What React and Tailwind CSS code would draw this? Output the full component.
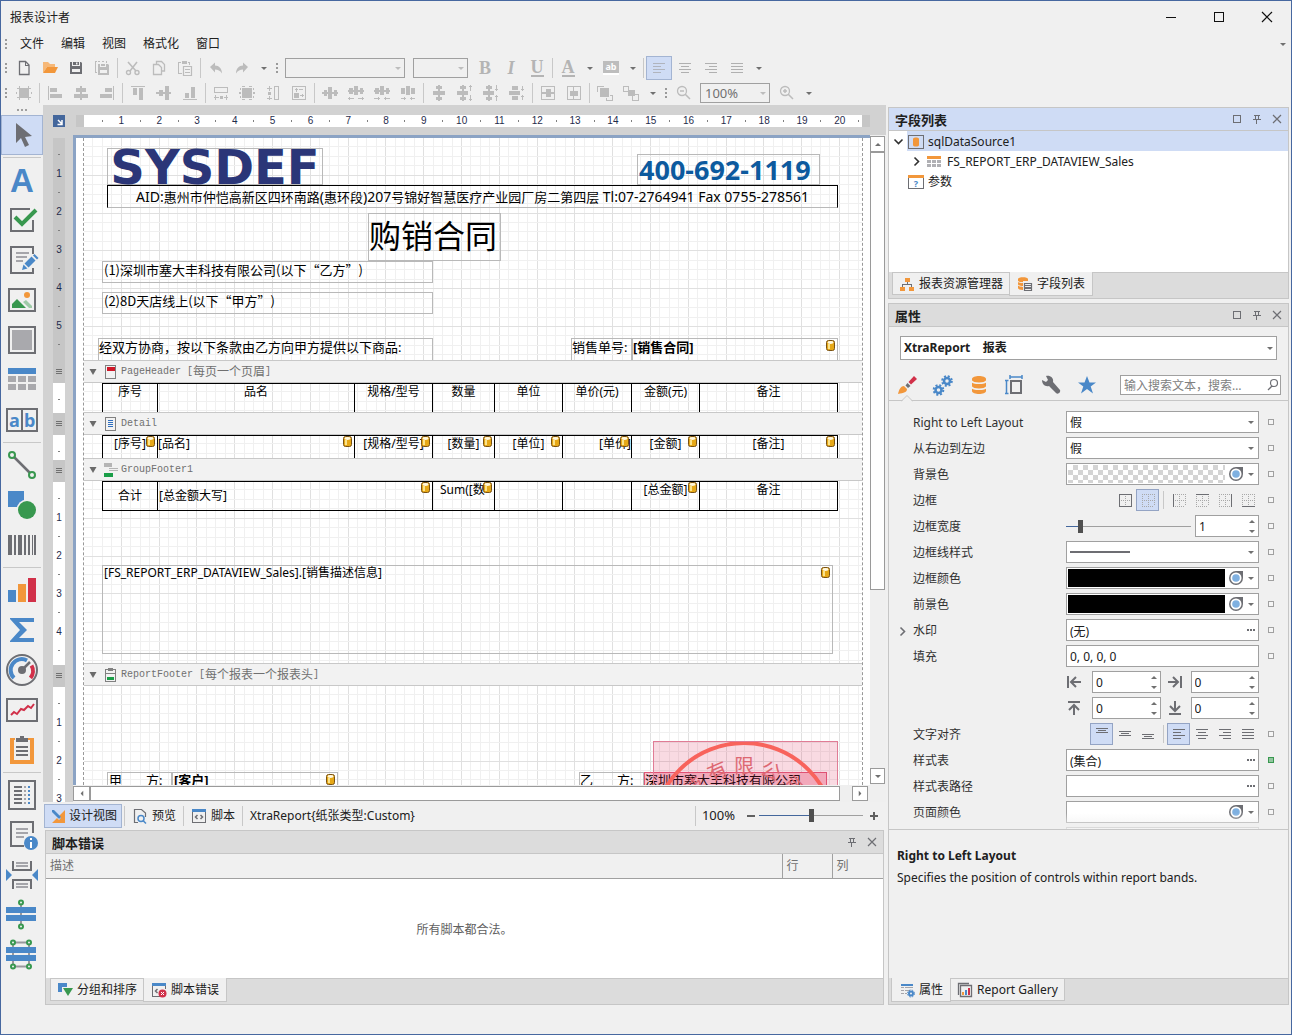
import React, { useState } from "react";
import clsx from "clsx";

const GRAY = "#6d6e73";
const OFF = "#bcbcbc";
const BLUE = "#4a88c8";
const GREEN = "#38984f";
const ORANGE = "#f2973b";
const RED = "#d13049";

const Icon = ({ s = 16, color = GRAY, children }) => (
  <svg
    width={s}
    height={s}
    viewBox={`0 0 ${s} ${s}`}
    fill="none"
    style={{ color }}
    className="shrink-0 overflow-visible"
  >
    {children}
  </svg>
);

// Filled shape snapped to the pixel grid
const Px = ({ d, c = "currentColor" }) => (
  <path d={d} fill={c} shapeRendering="crispEdges" />
);

// Outline snapped to the pixel grid
const Ln = ({ d, c = "currentColor", w = 1, dash }) => (
  <path
    d={d}
    stroke={c}
    strokeWidth={w}
    strokeDasharray={dash}
    shapeRendering="crispEdges"
  />
);

const Arrow = ({ c = "#707070", up }) => (
  <svg width="6" height="3" viewBox="0 0 6 3" className="shrink-0">
    <path d={up ? "M0 3h6L3 0z" : "M0 0h6L3 3z"} fill={c} />
  </svg>
);

const Grip = () => (
  <span className="flex h-6 w-[10px] shrink-0 items-center justify-center">
    <Icon s={10} color="#9a9a9a">
      <Px d="M4 0h2v2h-2zM4 4h2v2h-2zM4 8h2v2h-2z" />
    </Icon>
  </span>
);

const Sep = () => (
  <span className="flex h-5 w-[5px] shrink-0 justify-center">
    <span className="w-px bg-[#c8c8c8]" />
  </span>
);

const ToolButton = ({ label, active, narrow, children }) => (
  <button
    type="button"
    aria-label={label}
    className={clsx(
      "flex shrink-0 items-center justify-center",
      narrow ? "h-6 w-[17px]" : "h-6 w-[26px]",
      active && "border border-[#a3b4d2] bg-[#cfdcf5]"
    )}
  >
    {children}
  </button>
);

const ALIGN = {
  left: "M2 3h12v1h-12zM2 6h8v1h-8zM2 9h12v1h-12zM2 12h8v1h-8z",
  center: "M2 3h12v1h-12zM4 6h8v1h-8zM2 9h12v1h-12zM4 12h8v1h-8z",
  right: "M2 3h12v1h-12zM6 6h8v1h-8zM2 9h12v1h-12zM6 12h8v1h-8z",
  justify: "M2 3h12v1h-12zM2 6h12v1h-12zM2 9h12v1h-12zM2 12h12v1h-12z",
};

const AlignIcon = ({ kind, color }) => (
  <Icon color={color}>
    <Px d={ALIGN[kind]} />
  </Icon>
);

const TitleBar = () => (
  <header className="flex h-8 shrink-0 items-center justify-between pl-[9px] text-xs text-[#202020]">
    <h1 className="pt-px">报表设计者</h1>
    <div className="flex">
      <button type="button" aria-label="Minimize" className="flex h-8 w-12 items-center justify-center">
        <Icon s={12} color="#101010">
          <Px d="M1 6h10v1h-10z" />
        </Icon>
      </button>
      <button type="button" aria-label="Maximize" className="flex h-8 w-12 items-center justify-center">
        <Icon s={12} color="#101010">
          <Ln d="M1.5 1.5h9v9h-9z" />
        </Icon>
      </button>
      <button type="button" aria-label="Close" className="flex h-8 w-12 items-center justify-center">
        <Icon s={12} color="#101010">
          <path d="M1 1l10 10M11 1L1 11" stroke="currentColor" strokeWidth="1.2" />
        </Icon>
      </button>
    </div>
  </header>
);

const MenuBar = () => (
  <nav className="flex h-[22px] shrink-0 items-center gap-px text-xs text-[#202020]">
    <Grip />
    {["文件", "编辑", "视图", "格式化", "窗口"].map((m) => (
      <button key={m} type="button" className="px-2 whitespace-nowrap">
        {m}
      </button>
    ))}
    <span className="mr-[5px] ml-auto">
      <Arrow />
    </span>
  </nav>
);

const ToolbarSelect = ({ label, width, value = "" }) => (
  <span className={clsx("relative flex shrink-0", width)}>
    <select
      aria-label={label}
      defaultValue={value}
      className="h-5 w-full appearance-none border border-[#a0a0a0] bg-[#f0f0f0] px-1 text-[13px] leading-4 text-[#707070]"
    >
      <option>{value}</option>
    </select>
    <span className="pointer-events-none absolute top-[9px] right-1 flex">
      <Arrow c="#bdbdbd" />
    </span>
  </span>
);

const FormatToolbar = () => (
  <div className="flex h-[26px] shrink-0 items-center">
    <Grip />
    <ToolButton label="New">
      <Icon>
        <path d="M3.5 1.5h6l3.500 3.500v9.500h-9.500z" stroke="currentColor" strokeWidth="1.3" />
        <Px d="M9 2h1v3h3v1h-4z" />
      </Icon>
    </ToolButton>
    <ToolButton label="Open">
      <Icon>
        <path d="M1 13V2h5l2 2h5v3H5z" fill="#f6b878" />
        <path d="M1 13l4-6h11l-3 6z" fill={ORANGE} />
      </Icon>
    </ToolButton>
    <ToolButton label="Save">
      <Icon>
        <path
          fillRule="evenodd"
          d="M2 2h2v4h8V2h1l1 1v11H2zM4 9v3h8V9zM5 2h6v3H5zM8 2.500v2h1.500v-2z"
          fill="currentColor"
        />
      </Icon>
    </ToolButton>
    <ToolButton label="Save all">
      <Icon color={OFF}>
        <Px d="M1 1h2v1h-1v10h1v1h-2zM4 1h2v1h-2zM8 1h2v1h-2zM12 1h1v2h-1z" />
        <path
          fillRule="evenodd"
          d="M4 4h2v3h6V4h2l1 1v10H4zM6 10v3h7v-3zM7 4h4v2H7z"
          fill="currentColor"
        />
      </Icon>
    </ToolButton>
    <Sep />
    <ToolButton label="Cut">
      <Icon color={OFF}>
        <path d="M3 2l8 9M12 2L5 11" stroke="currentColor" strokeWidth="1.6" />
        <circle cx="3.500" cy="12.500" r="2" stroke="currentColor" strokeWidth="1.4" />
        <circle cx="12" cy="12.500" r="2" stroke="currentColor" strokeWidth="1.4" />
      </Icon>
    </ToolButton>
    <ToolButton label="Copy">
      <Icon color={OFF}>
        <path d="M5.500 4V1.500h5l3 3V11H11" stroke="currentColor" strokeWidth="1.3" />
        <path d="M2.500 4.500h5l3 3v7h-8z" stroke="currentColor" strokeWidth="1.3" />
      </Icon>
    </ToolButton>
    <ToolButton label="Paste">
      <Icon color={OFF}>
        <Px d="M1 2h3v1h-2v10h3v1h-4zM5 1h5v3h-5zM11 2h2v3h-1v-2h-1z" />
        <path d="M6.500 6.500h8v9h-8z" stroke="currentColor" strokeWidth="1.2" />
        <Px d="M8 9h5v1h-5zM8 12h5v1h-5z" />
      </Icon>
    </ToolButton>
    <Sep />
    <ToolButton label="Undo">
      <Icon color={OFF}>
        <path d="M2 7l5-4.500v3c4 0 7 3 7 8-2-3-4-4-7-4v3z" fill="currentColor" />
      </Icon>
    </ToolButton>
    <ToolButton label="Redo">
      <Icon color={OFF}>
        <path d="M14 7L9 2.500v3c-4 0-7 3-7 8 2-3 4-4 7-4v3z" fill="currentColor" />
      </Icon>
    </ToolButton>
    <ToolButton label="Toolbar options" narrow>
      <Arrow />
    </ToolButton>
    <Grip />
    <span className="ml-[3px] flex gap-2">
      <ToolbarSelect label="Font" width="w-[120px]" />
      <ToolbarSelect label="Size" width="w-[55px]" />
    </span>
    <span className="ml-1 flex items-center font-['Liberation_Serif',serif] text-lg leading-5 font-bold text-[#b4b4b4]">
      <ToolButton label="Bold">B</ToolButton>
      <ToolButton label="Italic">
        <i>I</i>
      </ToolButton>
      <ToolButton label="Underline">
        <span className="border-b-2 leading-4">U</span>
      </ToolButton>
    </span>
    <Sep />
    <span className="flex font-['Liberation_Serif',serif] text-lg font-bold text-[#b4b4b4]">
      <ToolButton label="Fore color">
        <span className="border-b-2 leading-4">A</span>
      </ToolButton>
    </span>
    <ToolButton label="Fore color list" narrow>
      <Arrow />
    </ToolButton>
    <ToolButton label="Back color">
      <span className="h-[14px] w-4 border-b-2 border-white bg-[#bdbdbd] text-[9px] leading-[11px] font-bold text-white">
        ab
      </span>
    </ToolButton>
    <ToolButton label="Back color list" narrow>
      <Arrow />
    </ToolButton>
    <Sep />
    <ToolButton label="Align left" active>
      <AlignIcon kind="left" color="#b0b4bd" />
    </ToolButton>
    <ToolButton label="Align center">
      <AlignIcon kind="center" color="#b0b0b0" />
    </ToolButton>
    <ToolButton label="Align right">
      <AlignIcon kind="right" color="#b0b0b0" />
    </ToolButton>
    <ToolButton label="Justify">
      <AlignIcon kind="justify" color="#b0b0b0" />
    </ToolButton>
    <ToolButton label="Toolbar options" narrow>
      <Arrow />
    </ToolButton>
  </div>
);

// Groups of the layout toolbar, one path per button
const layoutGroups = [
  [["Snap to grid", "M4 4h8v8h-8zM1 3h14v1h-14zM1 12h14v1h-14zM3 1h1v14h-1zM12 1h1v14h-1zM0 7h1v2h-1zM15 7h1v2h-1z"]],
  [
    ["Align lefts", "M1 1h1v14h-1zM3 3h7v4h-7zM3 9h12v4h-12z"],
    ["Align centers", "M7 1h2v14h-2zM3 3h10v4h-10zM1 9h14v4h-14z"],
    ["Align rights", "M14 1h1v14h-1zM6 3h7v4h-7zM1 9h12v4h-12z"],
  ],
  [
    ["Align tops", "M1 1h14v1h-14zM3 3h4v7h-4zM9 3h4v12h-4z"],
    ["Align middles", "M0 7h15v2h-15zM3 5h4v6h-4zM9 1h4v14h-4z"],
    ["Align bottoms", "M1 14h14v1h-14zM3 8h4v5h-4zM9 2h4v11h-4z"],
  ],
  [
    ["Same width", "M1 2h14v1h-14zM1 7h14v1h-14zM1 2h1v6h-1zM14 2h1v6h-1zM1 12h5v1h-5zM2 10h1v5h-1zM7 11h3v3h-3zM11 12h4v1h-4zM13 10h1v5h-1z"],
    ["Size to grid", "M3 3h10v10h-10zM1 3h1v2h-1zM1 11h1v2h-1zM14 3h1v2h-1zM14 11h1v2h-1zM3 1h3v1h-3zM10 1h3v1h-3zM3 14h3v1h-3zM10 14h3v1h-3zM0 7h2v2h-2zM14 7h2v2h-2z"],
    ["Same height", "M9 1h5v1h-5zM9 14h5v1h-5zM9 1h1v14h-1zM13 1h1v14h-1zM4 1h1v5h-1zM2 3h5v1h-5zM3 7h3v3h-3zM4 11h1v4h-1zM2 13h5v1h-5z"],
    ["Same size", "M1 1h14v1h-14zM1 14h14v1h-14zM1 1h1v14h-1zM14 1h1v14h-1zM3 8h5v5h-5zM5 3h1v4h-1zM4 4h3v1h-3zM9 10h4v1h-4zM11 9h1v3h-1zM8 4h4v1h-4z"],
  ],
  [
    ["Equal horizontal spacing", "M0 7h16v2h-16zM2 5h3v6h-3zM6 2h4v12h-4zM12 5h3v6h-3z"],
    ["Increase horizontal spacing", "M0 5h16v2h-16zM1 3h4v6h-4zM6 1h4v9h-4zM12 3h3v6h-3zM0 13h6v1h-6zM1 12h1v3h-1zM10 13h6v1h-6zM14 12h1v3h-1z"],
    ["Decrease horizontal spacing", "M0 5h16v2h-16zM1 3h4v6h-4zM6 1h4v9h-4zM12 3h3v6h-3zM0 13h6v1h-6zM4 12h1v3h-1zM10 13h6v1h-6zM11 12h1v3h-1z"],
    ["Remove horizontal spacing", "M1 3h4v6h-4zM6 1h4v9h-4zM11 3h4v6h-4zM1 13h5v1h-5zM4 12h1v3h-1zM10 13h5v1h-5zM11 12h1v3h-1z"],
  ],
  [
    ["Equal vertical spacing", "M7 0h2v16h-2zM5 1h6v3h-6zM2 6h12v4h-12zM5 12h6v3h-6z"],
    ["Increase vertical spacing", "M5 0h2v16h-2zM3 1h6v3h-6zM0 6h11v4h-11zM3 12h6v3h-6zM13 0h1v6h-1zM12 1h3v1h-3zM13 10h1v6h-1zM12 14h3v1h-3z"],
    ["Decrease vertical spacing", "M5 0h2v16h-2zM3 1h6v3h-6zM0 6h11v4h-11zM3 12h6v3h-6zM13 0h1v6h-1zM12 4h3v1h-3zM13 10h1v6h-1zM12 11h3v1h-3z"],
    ["Remove vertical spacing", "M3 1h6v4h-6zM0 6h11v4h-11zM3 11h6v4h-6zM13 1h1v5h-1zM12 4h3v1h-3zM13 10h1v5h-1zM12 11h3v1h-3z"],
  ],
  [
    ["Center horizontally", "M1 1h14v1h-14zM1 14h14v1h-14zM1 1h1v14h-1zM14 1h1v14h-1zM6 4h5v8h-5zM2 7h12v2h-12z"],
    ["Center vertically", "M1 1h14v1h-14zM1 14h14v1h-14zM1 1h1v14h-1zM14 1h1v14h-1zM4 6h8v5h-8zM7 2h1v12h-1z"],
  ],
  [
    ["Bring to front", "M3 3h9v9h-9zM0 1h7v1h-7zM0 1h1v6h-1zM15 10h1v6h-1zM9 15h7v1h-7zM13 10h3v1h-3zM9 13h1v3h-1z"],
    ["Send to back", "M5 5h7v6h-7zM0 1h6v1h-6zM0 6h6v1h-6zM0 1h1v6h-1zM5 1h1v6h-1zM9 9h7v1h-7zM9 15h7v1h-7zM9 9h1v7h-1zM15 9h1v7h-1z"],
  ],
];

const LayoutToolbar = () => (
  <div className="flex h-6 shrink-0 items-center">
    <Grip />
    {layoutGroups.map((group, i) => (
      <React.Fragment key={i}>
        {i > 0 && <Sep />}
        {group.map(([label, d]) => (
          <ToolButton key={label} label={label}>
            <Icon color={OFF}>
              <Px d={d} />
            </Icon>
          </ToolButton>
        ))}
      </React.Fragment>
    ))}
    <ToolButton label="Toolbar options" narrow>
      <Arrow />
    </ToolButton>
    <Grip />
    <ToolButton label="Zoom out">
      <Icon color={OFF}>
        <circle cx="6" cy="6" r="4.500" stroke="currentColor" strokeWidth="1.3" />
        <path d="M4 6h4M9 9l5 5" stroke="currentColor" strokeWidth="1.5" />
      </Icon>
    </ToolButton>
    <span className="ml-[3px] flex">
      <ToolbarSelect label="Zoom" width="w-[70px]" value="100%" />
    </span>
    <span className="ml-1 flex">
      <ToolButton label="Zoom in">
        <Icon color={OFF}>
          <circle cx="6" cy="6" r="4.500" stroke="currentColor" strokeWidth="1.3" />
          <path d="M4 6h4M6 4v4M9 9l5 5" stroke="currentColor" strokeWidth="1.5" />
        </Icon>
      </ToolButton>
      <ToolButton label="Toolbar options" narrow>
        <Arrow />
      </ToolButton>
    </span>
  </div>
);

const toolboxGroups = [
  [
    [
      "Label",
      <text x="16" y="28" textAnchor="middle" fontSize="33" fontWeight="700" fill={BLUE} fontFamily="Liberation Sans, sans-serif">
        A
      </text>,
    ],
    [
      "Check box",
      <>
        <path d="M24 5H5v22h22V16" stroke={GRAY} strokeWidth="2" />
        <path d="M9 13l7 7L30 6" stroke={GREEN} strokeWidth="4" />
      </>,
    ],
    [
      "Rich text",
      <>
        <path d="M27 10V3H5v26h22v-5" stroke={GRAY} strokeWidth="2" />
        <Px d="M10 8h13v2h-13zM10 12h11v2h-11zM10 16h7v2h-7z" c="#a5a5aa" />
        <path d="M16 26l1.500-5.500 4 4z" fill={BLUE} />
        <path d="M18.500 19.500l7-7 4 4-7 7zM27 11.500l1.500-1.500 4 4-1.500 1.500z" fill={BLUE} />
      </>,
    ],
    [
      "Picture box",
      <>
        <path d="M3 5h26v22H3z" stroke={GRAY} strokeWidth="2" />
        <path d="M6 24v-4l5-5 9 9z" fill={GREEN} />
        <path d="M17 18l3-2 6 6v2h-3z" fill="#9ecaa7" />
        <circle cx="21" cy="11" r="3" fill={ORANGE} />
      </>,
    ],
    [
      "Panel",
      <>
        <path d="M3 3h26v26H3z" stroke={GRAY} strokeWidth="2" />
        <Px d="M6 6h20v20h-20z" c="#a9a9ad" />
      </>,
    ],
    [
      "Table",
      <>
        <Px d="M2 4h28v6h-28z" c={BLUE} />
        <Px
          d="M2 12h8v6h-8zM12 12h8v6h-8zM22 12h8v6h-8zM2 20h8v6h-8zM12 20h8v6h-8zM22 20h8v6h-8z"
          c="#a9a9ad"
        />
      </>,
    ],
    [
      "Character comb",
      <>
        <path d="M1 5h30v22H1zM16 5v22" stroke={GRAY} strokeWidth="2" />
        <text x="3" y="23" fontSize="18" fontWeight="700" fill={BLUE} fontFamily="Noto Sans, sans-serif">
          a
        </text>
        <text x="18" y="23" fontSize="18" fontWeight="700" fill={BLUE} fontFamily="Noto Sans, sans-serif">
          b
        </text>
      </>,
    ],
  ],
  [
    [
      "Line",
      <>
        <path d="M8 8l16 16" stroke={GRAY} strokeWidth="2.5" />
        <circle cx="6" cy="6" r="3" stroke={GREEN} strokeWidth="2" />
        <circle cx="26" cy="26" r="3" stroke={GREEN} strokeWidth="2" />
      </>,
    ],
    [
      "Shape",
      <>
        <Px d="M2 2h16v16h-16z" c={BLUE} />
        <circle cx="21" cy="21" r="10.500" fill="#f0f0f0" />
        <circle cx="21" cy="21" r="9" fill={GREEN} />
      </>,
    ],
    [
      "Bar code",
      <Px
        d="M2 6h4v20h-4zM8 6h2v20h-2zM12 6h4v20h-4zM18 6h2v20h-2zM22 6h2v20h-2zM26 6h1v20h-1zM28 6h2v20h-2z"
        c={GRAY}
      />,
    ],
  ],
  [
    [
      "Chart",
      <>
        <Px d="M2 16h8v12h-8z" c={BLUE} />
        <Px d="M12 10h8v18h-8z" c={ORANGE} />
        <Px d="M22 4h8v24h-8z" c={RED} />
      </>,
    ],
    ["Pivot grid", <path d="M4 4h24v4H13l8 8-8 8h15v4H4v-1l10-11L4 5z" fill={BLUE} />],
    [
      "Gauge",
      <>
        <circle cx="16" cy="16" r="15" stroke={GRAY} strokeWidth="2" />
        <path d="M8 24A11 11 0 0 1 21 6.500" stroke={BLUE} strokeWidth="4" />
        <path d="M25.500 11.500A11 11 0 0 1 24.500 24" stroke={RED} strokeWidth="4" />
        <circle cx="16" cy="16" r="4" fill={GRAY} />
        <path d="M16 16l8-8" stroke={GRAY} strokeWidth="2.5" />
      </>,
    ],
    [
      "Sparkline",
      <>
        <path d="M1 5h30v22H1z" stroke={GRAY} strokeWidth="2" />
        <path d="M5 21l3-3 3 2 4-5 3 1 4-4 3 2 3-4" stroke={RED} strokeWidth="2" />
      </>,
    ],
    [
      "Sub-report",
      <>
        <Px d="M4 4h5v2h-1v20h16v-20h-2v-2h6v26h-24z" c={ORANGE} />
        <Px d="M10 4h4v-2h4v2h4v4h-12z" c={GRAY} />
        <Px d="M10 12h12v2h-12zM10 16h12v2h-12zM10 20h12v2h-12z" c={GRAY} />
      </>,
    ],
  ],
  [
    [
      "Table of contents",
      <>
        <path d="M3 2h26v28H3z" stroke={GRAY} strokeWidth="2" />
        <Px d="M8 7h8v2h-8zM8 11h8v2h-8zM8 15h8v2h-8zM8 19h8v2h-8zM8 23h8v2h-8z" c={GRAY} />
        <Px d="M18 7h2v2h-2zM18 11h2v2h-2zM18 15h2v2h-2zM18 19h2v2h-2zM18 23h2v2h-2z" c="#a5a5aa" />
        <Px d="M22 7h2v2h-2zM22 11h2v2h-2zM22 15h2v2h-2zM22 19h2v2h-2zM22 23h2v2h-2z" c={BLUE} />
      </>,
    ],
    [
      "Page info",
      <>
        <path d="M27 14V3H5v24h13" stroke={GRAY} strokeWidth="2" />
        <Px d="M10 9h12v2h-12zM10 13h12v2h-12zM10 17h8v2h-8z" c="#a5a5aa" />
        <circle cx="25" cy="24" r="7" fill={BLUE} />
        <Px d="M24 19h2v2h-2zM24 23h2v6h-2z" c="#fff" />
      </>,
    ],
    [
      "Page break",
      <>
        <path d="M7 2v9h18V2M7 30v-9h18v9" stroke={GRAY} strokeWidth="2" />
        <Px d="M10 3h12v2h-12zM10 6h12v2h-12zM10 24h12v2h-12zM10 27h12v2h-12z" c="#a5a5aa" />
        <path d="M0 10v12l6-6zM32 10v12l-6-6z" fill={BLUE} />
      </>,
    ],
    [
      "Cross-band line",
      <>
        <Px d="M14 4h2v24h-2z" c="#98989c" />
        <Px d="M0 8h30v6h-30zM0 16h30v6h-30z" c={BLUE} />
        <circle cx="15" cy="3.500" r="2" stroke={GREEN} strokeWidth="2" fill="#f0f0f0" />
        <circle cx="15" cy="27.500" r="2" stroke={GREEN} strokeWidth="2" fill="#f0f0f0" />
      </>,
    ],
    [
      "Cross-band box",
      <>
        <path d="M7 3.500h16v24H7z" stroke="#98989c" strokeWidth="2" />
        <Px d="M0 8h30v6h-30zM0 16h30v6h-30z" c={BLUE} />
        {[
          [7, 3.5],
          [23, 3.5],
          [7, 27.5],
          [23, 27.5],
        ].map(([x, y]) => (
          <circle key={`${x}-${y}`} cx={x} cy={y} r="2" stroke={GREEN} strokeWidth="2" fill="#f0f0f0" />
        ))}
      </>,
    ],
  ],
];

const Toolbox = () => (
  <aside className="flex w-[42px] shrink-0 flex-col">
    <span className="flex h-[10px] items-center justify-center gap-[2px]">
      <i className="size-[2px] bg-[#a0a0a0]" />
      <i className="size-[2px] bg-[#a0a0a0]" />
      <i className="size-[2px] bg-[#a0a0a0]" />
    </span>
    <button
      type="button"
      aria-label="Pointer"
      className="flex h-10 items-center justify-center border border-[#a3b4d2] bg-[#cfdcf5]"
    >
      <Icon s={32}>
        <path d="M10 4v20l5-5 4 9 4-2-4-8 7-1z" fill={GRAY} />
      </Icon>
    </button>
    {toolboxGroups.map((group, i) => (
      <React.Fragment key={i}>
        <hr className="mx-[2px] my-[2px] border-[#c8c8c8]" />
        {group.map(([label, art]) => (
          <button
            key={label}
            type="button"
            aria-label={label}
            className="flex h-10 items-center justify-center"
          >
            <Icon s={32}>{art}</Icon>
          </button>
        ))}
      </React.Fragment>
    ))}
  </aside>
);

const rulerText = "font-['Liberation_Sans',sans-serif] text-[10px] leading-3 text-[#1f2c4d]";

const HorizontalRuler = () => (
  <div className="flex h-[30px] shrink-0 pt-[10px] pl-[10px]">
    <button
      type="button"
      aria-label="Report menu"
      className="flex size-3 items-center justify-center bg-[#44679c]"
    >
      <Icon s={12} color="#fff">
        <path d="M5 5l4 4M9 5v4.500H4.500" stroke="currentColor" strokeWidth="1.5" />
      </Icon>
    </button>
    <span className="ml-[11px] h-3 w-2 bg-[#c6c6c6]" />
    <div className={clsx("flex h-3 flex-1 overflow-hidden bg-white pl-[9px]", rulerText)}>
      <div className="flex w-[775px] shrink-0">
        {Array.from({ length: 41 }, (_, i) => (
          <span key={i} className="flex flex-1 items-center justify-center">
            {i % 2 ? (i + 1) / 2 : <i className="h-[2px] w-px bg-[#808080]" />}
          </span>
        ))}
      </div>
    </div>
    <span className="mr-4 h-3 w-2 bg-[#c6c6c6]" />
  </div>
);

const RulerPart = ({ ticks, className }) => (
  <div className={clsx("shrink-0 overflow-hidden pt-[7px]", rulerText, className)}>
    {Array.from({ length: ticks }, (_, i) => (
      <span key={i} className="flex h-[19px] items-center justify-center">
        {i % 2 ? (i + 1) / 2 : <i className="h-px w-[2px] bg-[#808080]" />}
      </span>
    ))}
  </div>
);

const RulerHandle = () => (
  <span className="flex h-[22px] w-3 shrink-0 items-center justify-center bg-[#c6c6c6]">
    <Icon s={6} color="#707070">
      <Px d="M0 0h6v1h-6zM0 2h6v1h-6zM0 4h6v1h-6z" />
    </Icon>
  </span>
);

const VerticalRuler = () => (
  <div className="mr-2 ml-[10px] flex w-3 shrink-0 flex-col overflow-hidden pt-[3px]">
    <RulerPart ticks={11} className="h-[223px] bg-[#c6c6c6]" />
    <RulerHandle />
    <RulerPart ticks={1} className="h-[30px] bg-white" />
    <RulerHandle />
    <RulerPart ticks={1} className="h-[25px] bg-white" />
    <RulerHandle />
    <RulerPart ticks={9} className="h-[183px] bg-white" />
    <RulerHandle />
    <RulerPart ticks={6} className="flex-1 bg-white" />
  </div>
);

// Four thin lines per centimetre, the fourth one darker
const Grid = () => {
  const step = 96 / 2.54 / 4;
  const at = (i) => Math.round(i * step) - 0.5;
  const shade = (i) => (i % 4 ? "#f0f0f0" : "#e0e0e0");
  const order = (n) =>
    Array.from({ length: n }, (_, i) => i + 1).sort((a, b) => (a % 4 === 0) - (b % 4 === 0));
  return (
    <svg className="absolute inset-0 size-full" aria-hidden="true">
      {order(82).map((i) => (
        <line key={`v${i}`} x1={at(i)} x2={at(i)} y1="0" y2="100%" stroke={shade(i)} />
      ))}
      {order(24).map((i) => (
        <line key={`h${i}`} y1={at(i)} y2={at(i)} x1="0" x2="100%" stroke={shade(i)} />
      ))}
    </svg>
  );
};

const DbIcon = ({ className }) => (
  <svg width="9" height="11" viewBox="0 0 9 11" className={clsx("absolute", className)}>
    <rect x="0.5" y="0.5" width="8" height="10" rx="2" fill="#e6a817" stroke="#7a5212" />
    <path d="M2 4h2v5h-2z" fill="#fbe38a" />
    <ellipse cx="4.500" cy="2.500" rx="3" ry="1.400" fill="#fff8e0" />
  </svg>
);

const Label = ({ className, bound, children }) => (
  <div className={clsx("absolute border border-[#b9b9b9] whitespace-nowrap text-black", className)}>
    {children}
    {bound && <DbIcon className="top-[1px] right-[2px]" />}
  </div>
);

const Band = ({ className, children }) => (
  <section className={clsx("relative overflow-hidden", className)}>
    <Grid />
    {children}
  </section>
);

const BandTitle = ({ icon, name, note }) => (
  <h3 className="flex h-[23px] shrink-0 items-center border-y border-[#c8c8c8] bg-[#f2f2f2] pl-[5px] text-xs whitespace-nowrap text-[#707070]">
    <Icon s={8}>
      <path d="M0.500 1h7L4 7z" fill="#6a6a6a" />
    </Icon>
    <span className="mr-[2px] ml-[6px] flex">
      <Icon s={16}>{icon}</Icon>
    </span>
    <span className="font-['Liberation_Mono',monospace] text-[10px]">
      {name}
      {note && "\u00a0["}
    </span>
    {note}
    {note && <span className="font-['Liberation_Mono',monospace] text-[10px]">]</span>}
  </h3>
);

const Columns = () => (
  <colgroup>
    <col className="w-[55px]" />
    <col className="w-[197px]" />
    <col className="w-[78px]" />
    <col className="w-[62px]" />
    <col className="w-[68px]" />
    <col className="w-[69px]" />
    <col className="w-[68px]" />
    <col className="w-[138px]" />
  </colgroup>
);

const tableStyle =
  "relative ml-[18px] w-[735px] table-fixed border-collapse text-xs leading-4 whitespace-nowrap text-black";
const cell = "relative overflow-hidden border border-b-0 border-black p-0 font-normal";

const detailCells = [
  ["[序号]", "text-center"],
  ["[品名]", "text-left"],
  ["[规格/型号]", "text-center"],
  ["[数量]", "text-center"],
  ["[单位]", "text-center"],
  ["[单价]", "text-right"],
  ["[金额]", "text-center"],
  ["[备注]", "text-center"],
];

// Company seal: characters run along the inside of the ring
const Seal = () => (
  <svg
    width="185"
    height="186"
    viewBox="0 0 185 186"
    className="absolute top-[55px] left-[569px] border border-[#e07c95]"
  >
    <rect width="185" height="186" fill="#e03060" fillOpacity="0.18" />
    <circle cx="91" cy="93" r="92" fill="none" stroke="#f8635c" strokeWidth="4" />
    {["科", "技", "有", "限", "公", "司", "章"].map((ch, i) => (
      <text
        key={ch}
        x="91"
        y="31"
        fontSize="20"
        textAnchor="middle"
        fill="#dd6872"
        transform={`rotate(${(i - 3) * 23} 91 93)`}
      >
        {ch}
      </text>
    ))}
  </svg>
);

const Surface = () => (
  <div className="flex min-h-0 flex-1 overflow-hidden border-t-[3px] border-l-[3px] border-[#8ba3c4] bg-white pr-[7px] pl-[7px]">
    <div className="flex min-w-0 flex-1 flex-col border-x border-dashed border-[#999999]">
      <Band className="h-[222px] shrink-0">
        <Label className="top-[10px] left-[23px] flex h-[37px] w-[216px] items-center justify-center font-['DejaVu_Sans',sans-serif] text-[48px] leading-[36px] font-bold">
          <span className="text-[#2b3678]">SYSDEF</span>
        </Label>
        <Label className="top-4 left-[553px] h-[31px] w-[183px] pl-px text-[27px] leading-[30px] font-bold">
          <span className="text-[#0d5a9e]">400-692-1119</span>
        </Label>
        <Label className="top-[47px] left-[23px] h-[23px] w-[731px] border-t-black! border-r-black! border-l-black! text-center text-sm leading-[22px]">
          AID:
          <span className="text-[13px]">惠州市仲恺高新区四环南路</span>(
          <span className="text-[13px]">惠环段</span>)207
          <span className="text-[13px]">号锦好智慧医疗产业园厂房二第四层</span> Tl:07-2764941 Fax
          0755-278561
        </Label>
        <Label className="top-[75px] left-[284px] h-12 w-[133px] text-[32px] leading-[44px]">
          购销合同
        </Label>
        <Label className="top-[123px] left-[18px] h-[22px] w-[331px] pl-px font-['Noto_Sans_CJK_SC',sans-serif] text-[13px] leading-4 [text-spacing-trim:space-all]">
          (1)深圳市塞大丰科技有限公司(以下“乙方”)
        </Label>
        <Label className="top-[154px] left-[18px] h-[22px] w-[331px] pl-px font-['Noto_Sans_CJK_SC',sans-serif] text-[13px] leading-4 [text-spacing-trim:space-all]">
          (2)8D天店线上(以下“甲方”)
        </Label>
        <Label className="top-[200px] left-[14px] h-6 w-[335px] text-[13px] leading-4">
          经双方协商，按以下条款由乙方向甲方提供以下商品:
        </Label>
        <Label className="top-[200px] left-[487px] h-6 w-[61px] text-[13px] leading-4">
          销售单号:
        </Label>
        <Label className="top-[200px] left-[548px] h-6 w-[206px] text-[13px] leading-4 font-bold" bound>
          [销售合同]
        </Label>
      </Band>

      <BandTitle
        name="PageHeader"
        note="每页一个页眉"
        icon={
          <>
            <Ln d="M2.500 1.500h10v13h-10z" c="#808080" />
            <Px d="M4 3h8v4h-8z" c="#d01828" />
          </>
        }
      />
      <Band className="h-[29px] shrink-0">
        <table className={clsx(tableStyle, "h-[34px]")}>
          <Columns />
          <thead>
            <tr className="align-top">
              {["序号", "品名", "规格/型号", "数量", "单位", "单价(元)", "金额(元)", "备注"].map((h) => (
                <th key={h} className={cell}>
                  {h}
                </th>
              ))}
            </tr>
          </thead>
        </table>
      </Band>

      <BandTitle
        name="Detail"
        icon={
          <>
            <Ln d="M2.500 1.500h10v13h-10z" c="#808080" />
            <Px d="M5 4h5v1h-5zM5 6h5v1h-5zM5 8h5v1h-5zM5 10h5v1h-5z" c="#2f6fc0" />
          </>
        }
      />
      <Band className="h-[23px] shrink-0">
        <table className={clsx(tableStyle, "h-[28px]")}>
          <Columns />
          <tbody>
            <tr className="align-top">
              {detailCells.map(([text, align]) => (
                <td key={text} className={clsx(cell, align)}>
                  {text}
                  <DbIcon className="top-0 right-[2px]" />
                </td>
              ))}
            </tr>
          </tbody>
        </table>
      </Band>

      <BandTitle
        name="GroupFooter1"
        icon={
          <>
            <Px d="M1 1h8v4h-8zM6 6h9v1h-9zM6 8h9v1h-9z" c="#b5b5b5" />
            <Px d="M1 11h9v4h-9z" c="#1a9e48" />
          </>
        }
      />
      <Band className="h-[182px] shrink-0">
        <table className={clsx(tableStyle, "h-[30px] border-b border-black")}>
          <Columns />
          <tbody>
            <tr className="align-top">
              <td className={clsx(cell, "text-center align-middle")}>合计</td>
              <td colSpan={2} className={clsx(cell, "pl-px align-middle")}>
                [总金额大写]
                <DbIcon className="top-0 right-[2px]" />
              </td>
              <td className={clsx(cell, "pl-[7px]")}>
                Sum([数
                <DbIcon className="top-0 right-[2px]" />
              </td>
              <td className={cell} />
              <td className={cell} />
              <td className={clsx(cell, "text-center")}>
                [总金额]
                <DbIcon className="top-0 right-[2px]" />
              </td>
              <td className={clsx(cell, "text-center")}>备注</td>
            </tr>
          </tbody>
        </table>
        <Label className="top-[84px] left-[18px] h-[89px] w-[731px] pl-px text-xs leading-[14px]" bound>
          [FS_REPORT_ERP_DATAVIEW_Sales].[销售描述信息]
        </Label>
      </Band>

      <BandTitle
        name="ReportFooter"
        note="每个报表一个报表头"
        icon={
          <>
            <Px d="M2 2h3v1h-2v11h9v-11h-2v-1h3v13h-11zM5 1h5v3h-5zM3 6h9v1h-9z" c="#808080" />
            <Px d="M4 10h7v3h-7z" c="#1a9e48" />
          </>
        }
      />
      <Band className="min-h-0 flex-1">
        <Label className="top-[86px] left-[23px] h-6 w-[65px] pl-px text-[13px] leading-[14px]">
          甲<span className="ml-6">方:</span>
        </Label>
        <Label className="top-[86px] left-[88px] h-6 w-[166px] pl-px text-[13px] leading-[14px] font-bold" bound>
          [客户]
        </Label>
        <Label className="top-[86px] left-[495px] h-6 w-[65px] text-[13px] leading-[14px]">
          乙<span className="ml-6">方:</span>
        </Label>
        <Label className="top-[86px] left-[560px] h-6 w-[183px] border-[#e05878]! bg-[#f7c3cf] text-[13px] leading-[14px]">
          深圳市塞大丰科技有限公司
        </Label>
        <Seal />
      </Band>
    </div>
  </div>
);

const scrollButton = "flex shrink-0 items-center justify-center border border-[#9a9a9a] bg-white";

const Designer = () => (
  <div className="flex min-h-0 flex-1 flex-col bg-[#d2d2d2]">
    <HorizontalRuler />
    <div className="flex min-h-0 flex-1">
      <VerticalRuler />
      <div className="flex min-w-0 flex-1 flex-col">
        <Surface />
        <div className="flex h-[17px] items-center bg-[#efefef]">
          <button type="button" aria-label="Scroll left" className={clsx(scrollButton, "h-[15px] w-[17px]")}>
            <span className="rotate-90">
              <Arrow />
            </span>
          </button>
          <span className="mr-3 h-[15px] flex-1 border border-[#9a9a9a] bg-white" />
          <button type="button" aria-label="Scroll right" className={clsx(scrollButton, "mr-[2px] h-[15px] w-4")}>
            <span className="-rotate-90">
              <Arrow />
            </span>
          </button>
        </div>
      </div>
      <div className="flex w-4 shrink-0 flex-col bg-[#efefef] pt-px">
        <button type="button" aria-label="Scroll up" className={clsx(scrollButton, "h-4 w-[15px]")}>
          <Arrow up />
        </button>
        <span className="h-[438px] w-[15px] border border-[#9a9a9a] bg-white" />
        <span className="flex-1" />
        <button type="button" aria-label="Scroll down" className={clsx(scrollButton, "mb-[18px] h-4 w-[15px]")}>
          <Arrow />
        </button>
      </div>
    </div>
  </div>
);

const slider =
  "h-[14px] appearance-none bg-transparent [&::-webkit-slider-runnable-track]:h-px [&::-webkit-slider-runnable-track]:bg-linear-to-r [&::-webkit-slider-runnable-track]:from-[#44679c] [&::-webkit-slider-runnable-track]:to-[#a0a0a0] [&::-webkit-slider-thumb]:-mt-[6px] [&::-webkit-slider-thumb]:h-[13px] [&::-webkit-slider-thumb]:w-[5px] [&::-webkit-slider-thumb]:appearance-none [&::-webkit-slider-thumb]:bg-[#505050]";

const StatusBar = () => (
  <div className="flex h-[27px] shrink-0 items-center pl-px text-xs whitespace-nowrap text-[#202020]">
    <button
      type="button"
      className="flex h-6 items-center gap-[3px] border border-[#a3b4d2] bg-[#cfdcf5] pr-1 pl-[5px]"
    >
      <Icon>
        <path d="M15 2v13H2l5-5 2 2 2-2-2-2z" fill={ORANGE} />
        <path d="M2 2l2 0 6.500 6.500v2h-2L2 4z" fill={BLUE} />
      </Icon>
      设计视图
    </button>
    <Sep />
    <button type="button" className="flex h-6 items-center gap-1 px-[5px]">
      <Icon>
        <path d="M6 14.500H2.500v-13h7L13.500 5v4" stroke={GRAY} strokeWidth="1.2" />
        <circle cx="9" cy="10.500" r="3" stroke={BLUE} strokeWidth="1.5" />
        <path d="M11 12.500l3 3" stroke={BLUE} strokeWidth="1.5" />
      </Icon>
      预览
    </button>
    <Sep />
    <button type="button" className="flex h-6 items-center gap-1 px-[5px]">
      <Icon>
        <Ln d="M1.500 2v12.500h13V2" c={GRAY} />
        <Px d="M1 1h14v3h-14z" c={BLUE} />
        <path d="M6.500 7L4.500 9l2 2M9.500 7l2 2-2 2" stroke={GRAY} strokeWidth="1.5" />
      </Icon>
      脚本
    </button>
    <Sep />
    <span className="ml-[5px]">XtraReport{"{纸张类型:Custom}"}</span>
    <span className="mr-1 ml-auto flex">
      <Sep />
    </span>
    <label htmlFor="zoom" className="text-[13px]">
      100%
    </label>
    <button type="button" aria-label="Zoom out" className="flex w-6 justify-end pr-1">
      <Icon s={8} color="#606060">
        <Px d="M0 3h8v2h-8z" />
      </Icon>
    </button>
    <input
      id="zoom"
      type="range"
      defaultValue={50}
      className={clsx(
        slider,
        "w-[104px] [&::-webkit-slider-runnable-track]:from-50% [&::-webkit-slider-runnable-track]:to-50%"
      )}
    />
    <button type="button" aria-label="Zoom in" className="mr-2 flex w-[15px] justify-end">
      <Icon s={8} color="#606060">
        <Px d="M0 3h8v2h-8zM3 0h2v8h-2z" />
      </Icon>
    </button>
  </div>
);

const HeaderButtons = ({ float = true }) => (
  <span className="flex">
    {float && (
      <button type="button" aria-label="Maximize panel" className="flex w-5 justify-center">
        <Icon s={10}>
          <Ln d="M1.500 1.500h7v7h-7z" />
        </Icon>
      </button>
    )}
    <button type="button" aria-label="Pin panel" className="flex w-5 justify-center">
      <Icon s={10}>
        <Px d="M2 1h6v1h-6zM3 2h1v3h-1zM6 2h1v3h-1zM1 5h8v1h-8zM4 6h1v4h-1z" />
      </Icon>
    </button>
    <button type="button" aria-label="Close panel" className="flex w-5 justify-center">
      <Icon s={10}>
        <path d="M1 1l8 8M9 1L1 9" stroke="currentColor" strokeWidth="1.2" />
      </Icon>
    </button>
  </span>
);

const PanelHeader = ({ title, active, float }) => (
  <div
    className={clsx(
      "flex h-[23px] shrink-0 items-center justify-between border-b border-[#c6c6c6] pr-px pl-[6px]",
      active ? "bg-[#cfdcf5]" : "bg-[#dcdcdc]"
    )}
  >
    <h2 className="pt-px text-[13px] leading-4 font-bold text-[#202020]">{title}</h2>
    <HeaderButtons float={float} />
  </div>
);

const Tabs = ({ items, active, onSelect, className }) => (
  <div role="tablist" className={clsx("flex h-[26px] shrink-0 items-start bg-[#dcdcdc]", className)}>
    {items.map(([name, icon], i) => (
      <button
        key={name}
        type="button"
        role="tab"
        aria-selected={i === active}
        onClick={() => onSelect(i)}
        className={clsx(
          "flex items-center gap-1 border-[#c6c6c6] bg-[#f0f0f0] pt-px text-xs whitespace-nowrap text-[#202020]",
          i === active ? "h-6 border-r border-b border-l px-[7px]" : "h-[23px] border-t border-b px-[6px]",
          i !== active && i < active && "border-l",
          i !== active && i > active && "border-r"
        )}
      >
        <Icon>{icon}</Icon>
        {name}
      </button>
    ))}
    <span className="flex-1 self-stretch border-t border-[#c6c6c6]" />
  </div>
);

const ErrorsPanel = () => {
  const [tab, setTab] = useState(1);
  return (
    <section className="mr-[2px] ml-[2px] mt-px flex h-[175px] shrink-0 flex-col border border-[#c6c6c6]">
      <PanelHeader title="脚本错误" float={false} />
      <div className="flex flex-1 flex-col bg-white">
        <table className="w-full table-fixed text-left text-xs text-[#707070]">
          <colgroup>
            <col />
            <col className="w-[50px]" />
            <col className="w-[51px]" />
          </colgroup>
          <thead className="bg-[#f0f0f0]">
            <tr className="h-6 border-b border-[#a0a0a0]">
              <th className="pl-1 font-normal">描述</th>
              <th className="border-l border-[#a0a0a0] pl-1 font-normal">行</th>
              <th className="border-l border-[#a0a0a0] pl-1 font-normal">列</th>
            </tr>
          </thead>
        </table>
        <p className="flex flex-1 items-center justify-center pt-1 text-xs text-[#606060]">
          所有脚本都合法。
        </p>
      </div>
      <Tabs
        className="pl-1"
        active={tab}
        onSelect={setTab}
        items={[
          [
            "分组和排序",
            <>
              <path d="M1 1h9v4H5v5H1z" fill={BLUE} />
              <path d="M6 6h10l-5 8z" fill={GREEN} />
            </>,
          ],
          [
            "脚本错误",
            <>
              <Ln d="M1.500 2v12.500h7M14.500 2v5" c={GRAY} />
              <Px d="M1 1h14v3h-14z" c={BLUE} />
              <path d="M6.500 7L4.500 9l2 2" stroke={GRAY} strokeWidth="1.5" />
              <circle cx="11.500" cy="11.500" r="4" fill={RED} />
              <path d="M10 10l3 3M13 10l-3 3" stroke="#fff" />
            </>,
          ],
        ]}
      />
    </section>
  );
};

const Chevron = ({ open, color = "#303030" }) => (
  <Icon s={9} color={color}>
    <path d={open ? "M0.500 2.500l4 4 4-4" : "M2.500 0.500l4 4-4 4"} stroke="currentColor" strokeWidth="1.6" />
  </Icon>
);

const FieldList = () => {
  const [tab, setTab] = useState(1);
  return (
    <section className="mt-[2px] flex h-[192px] shrink-0 flex-col border border-[#c6c6c6]">
      <PanelHeader title="字段列表" active />
      <ul className="flex-1 bg-white text-xs text-[#202020]">
        <li className="flex h-5 items-center">
          <span className="flex w-[18px] shrink-0 justify-center">
            <Chevron open />
          </span>
          <span className="flex h-full flex-1 items-center gap-1 bg-[#cfdcf5] pt-px pl-px">
            <Icon>
              <Ln d="M0.500 1.500h15v13h-15z" c={GRAY} />
              <path d="M5 5c0-2 6-2 6 0v6c0 2-6 2-6 0z" fill={ORANGE} />
            </Icon>
            sqlDataSource1
          </span>
        </li>
        <li className="flex h-5 items-center pt-px pl-[23px]">
          <Chevron />
          <span className="ml-[6px] flex items-center gap-1">
            <Icon>
              <Px d="M0 2h14v3h-14z" c={ORANGE} />
              <Px d="M0 6h4v3h-4zM5 6h4v3h-4zM10 6h4v3h-4zM0 10h4v3h-4zM5 10h4v3h-4zM10 10h4v3h-4z" c="#b0b0b4" />
            </Icon>
            FS_REPORT_ERP_DATAVIEW_Sales
          </span>
        </li>
        <li className="flex h-5 items-center gap-1 pt-[2px] pl-[19px]">
          <Icon>
            <Ln d="M0.500 3v11.500h15V3" c={GRAY} />
            <Px d="M0 1h16v3h-16z" c={ORANGE} />
            <text x="8" y="13" fontSize="9" fontWeight="700" textAnchor="middle" fill={BLUE}>
              ?
            </text>
          </Icon>
          参数
        </li>
      </ul>
      <Tabs
        className="pl-[3px]"
        active={tab}
        onSelect={setTab}
        items={[
          [
            "报表资源管理器",
            <>
              <Px d="M6 2h5v4h-5zM1 11h5v4h-5zM10 11h5v4h-5z" c={ORANGE} />
              <Ln d="M8.500 6v2.500M3.500 11V8.500h9V11" c={GRAY} />
            </>,
          ],
          [
            "字段列表",
            <>
              <path d="M1 3c0-2.500 10-2.500 10 0v2H6v9c-3 0-5-1-5-2z" fill={ORANGE} />
              <path d="M1 5.500c2 1.500 4 1 5 1M1 9c1 1 3 1.500 5 1.500" stroke="#f0f0f0" />
              <path d="M7.500 7.500h7v2h-7zM7.500 9.500h7v2h-7zM7.500 12.500h7v2h-7z" stroke={GRAY} strokeWidth="1.2" />
            </>,
          ],
        ]}
      />
    </section>
  );
};

const categories = [
  [
    "Appearance",
    <>
      <path d="M1 19c1-5 3-8 6-8l3 3c0 3-3 4-9 5z" fill={ORANGE} />
      <path d="M8.500 10.500l2-2.500 3 3-2.500 2z" fill={GRAY} />
      <path d="M11.500 7L17 1l3 3-6 5.500z" fill={RED} />
    </>,
  ],
  [
    "Behavior",
    <>
      <circle cx="14" cy="6" r="3" stroke={BLUE} strokeWidth="2.5" />
      <circle cx="14" cy="6" r="4.800" stroke={BLUE} strokeWidth="2" strokeDasharray="2 1.8" />
      <circle cx="5.500" cy="15" r="3" stroke={BLUE} strokeWidth="2.5" />
      <circle cx="5.500" cy="15" r="4.800" stroke={BLUE} strokeWidth="2" strokeDasharray="2 1.8" />
    </>,
  ],
  [
    "Data",
    <>
      <path d="M3 4c0-4 14-4 14 0v12c0 4-14 4-14 0z" fill={ORANGE} />
      <path d="M2.500 6c2 3 13 3 15 0M2.500 12c2 3 13 3 15 0" stroke="#f0f0f0" strokeWidth="1.5" />
    </>,
  ],
  [
    "Layout",
    <>
      <path d="M6 6h10v12H6z" stroke={GRAY} strokeWidth="2" />
      <path d="M5 2h12M5 0v4M17 0v4M1.500 6v12M0 5.500h3.500M0 18.500h3.500" stroke={BLUE} strokeWidth="1.5" />
    </>,
  ],
  [
    "Design",
    <path
      d="M1 5l4 2 2-2-2-4c4-1 8 2 7 6l7 8c1 2-2 5-4 3l-7-7c-4 1-7-2-7-6z"
      fill={GRAY}
    />,
  ],
  [
    "Favorites",
    <path d="M10 1l2.500 6.500H19l-5.300 4L16 18.500l-6-4.500-6 4.500 2.300-7L1 7.500h6.500z" fill={BLUE} />,
  ],
];

const fieldBox = "h-[22px] w-full border border-[#a0a0a0] bg-white text-xs text-[#202020]";

const SelectField = ({ id, children, blank }) => (
  <span className="relative flex flex-1">
    <select id={id} className={clsx(fieldBox, "appearance-none px-[3px] pt-px")}>
      <option>{children}</option>
    </select>
    {blank && <span className="pointer-events-none absolute top-[10px] left-1 h-[2px] w-[60px] bg-[#6d6e73]" />}
    <span className="pointer-events-none absolute top-[10px] right-[5px] flex">
      <Arrow />
    </span>
  </span>
);

const EllipsisField = ({ id, value, dots = true }) => (
  <span className="relative flex flex-1">
    <input id={id} type="text" defaultValue={value} className={clsx(fieldBox, "px-[3px] pt-px")} />
    {dots && (
      <button type="button" aria-label="More" className="absolute top-[10px] right-1 flex gap-px">
        <i className="size-[2px] bg-[#6d6e73]" />
        <i className="size-[2px] bg-[#6d6e73]" />
        <i className="size-[2px] bg-[#6d6e73]" />
      </button>
    )}
  </span>
);

const checker =
  "bg-[conic-gradient(#d4d4d4_25%,#ffffff_0_50%,#d4d4d4_0_75%,#ffffff_0)] bg-[length:10px_10px]";

const ColorField = ({ id, swatch }) => (
  <button id={id} type="button" className={clsx(fieldBox, "flex flex-1 items-center p-px pr-1")}>
    <span className={clsx("h-[18px] flex-1", swatch)} />
    <span className="mr-1 ml-[3px] flex">
      <Icon>
        <path d="M8 1h7v7A7 7 0 1 1 8 1z" fill={GRAY} />
        <circle cx="8" cy="8" r="5.500" fill="#fff" />
        <circle cx="8" cy="8" r="3.800" fill="#7fb0e0" />
      </Icon>
    </span>
    <Arrow />
  </button>
);

const SpinField = ({ id, label, value }) => (
  <span className="relative flex flex-1">
    <input
      id={id}
      aria-label={label}
      type="number"
      defaultValue={value}
      className={clsx(
        fieldBox,
        "min-w-0 [appearance:textfield] px-[3px] pt-px [&::-webkit-inner-spin-button]:appearance-none"
      )}
    />
    <span className="pointer-events-none absolute top-[5px] right-1 flex h-[13px] flex-col justify-between">
      <Arrow up />
      <Arrow />
    </span>
  </span>
);

const Toggle = ({ label, on, children }) => (
  <button
    type="button"
    aria-label={label}
    aria-pressed={!!on}
    className={clsx(
      "flex h-[22px] w-[23px] items-center justify-center",
      on && "border border-[#94a4c4] bg-[#cfdcf5]"
    )}
  >
    <Icon>{children}</Icon>
  </button>
);

const dotted = (
  <Ln d="M2.500 2v12M8.500 2v12M14.500 2v12M2 2.500h12M2 8.500h12M2 14.500h12" c="#a8a8a8" dash="1 1" />
);

const GroupSep = () => (
  <span className="flex h-[18px] w-2 justify-center">
    <span className="w-px bg-[#c8c8c8]" />
  </span>
);

const BorderButtons = () => (
  <span className="flex flex-1 items-center justify-end">
    <Toggle label="All borders">
      <Ln d="M2.500 2.500h12v12h-12z" />
      <Ln d="M8.500 4v10M4 8.500h10" c="#a8a8a8" dash="1 1" />
    </Toggle>
    <Toggle label="No borders" on>
      {dotted}
    </Toggle>
    <GroupSep />
    <Toggle label="Left border">
      {dotted}
      <Ln d="M2.500 2v13" />
    </Toggle>
    <Toggle label="Top border">
      {dotted}
      <Ln d="M2 2.500h13" />
    </Toggle>
    <Toggle label="Right border">
      {dotted}
      <Ln d="M14.500 2v13" />
    </Toggle>
    <Toggle label="Bottom border">
      {dotted}
      <Ln d="M2 14.500h13" />
    </Toggle>
  </span>
);

const AlignButtons = () => (
  <span className="flex flex-1 items-center justify-end">
    <Toggle label="Top" on>
      <Px d="M2 2h12v1h-12zM4 4h8v1h-8zM2 6h12v1h-12z" />
    </Toggle>
    <Toggle label="Middle">
      <Px d="M2 5h12v1h-12zM4 7h8v1h-8zM2 9h12v1h-12z" />
    </Toggle>
    <Toggle label="Bottom">
      <Px d="M2 8h12v1h-12zM4 10h8v1h-8zM2 12h12v1h-12z" />
    </Toggle>
    <GroupSep />
    <Toggle label="Left" on>
      <Px d={ALIGN.left} />
    </Toggle>
    <Toggle label="Center">
      <Px d={ALIGN.center} />
    </Toggle>
    <Toggle label="Right">
      <Px d={ALIGN.right} />
    </Toggle>
    <Toggle label="Justify">
      <Px d={ALIGN.justify} />
    </Toggle>
  </span>
);

const PadIcon = ({ turn }) => (
  <Icon>
    <g transform={`rotate(${turn} 8 8)`}>
      <path d="M2 2v12M15 8H5M10 3L5 8l5 5" stroke="currentColor" strokeWidth="2" />
    </g>
  </Icon>
);

const Row = ({ label, id, expand, marker = true, set, children }) => (
  <div className="flex h-[26px] items-center">
    <span className="flex w-[177px] shrink-0 items-center pt-[2px] pl-[9px] text-xs text-[#303030]">
      <span className="flex w-[15px]">{expand && <Chevron color={GRAY} />}</span>
      {label && (
        <label htmlFor={id} className="whitespace-nowrap">
          {label}
        </label>
      )}
    </span>
    {children}
    <span className="mr-[13px] ml-[9px] flex w-[7px]">
      {marker && (
        <button
          type="button"
          aria-label="Property marker"
          className={clsx(
            "size-[6px] border",
            set ? "border-[#38984f] bg-[#93c6a0]" : "border-[#a0a0a0] bg-[#f6f6f6]"
          )}
        />
      )}
    </span>
  </div>
);

const PropertyRows = () => (
  <div className="relative min-h-0 flex-1 overflow-hidden pt-2">
    <Row label="Right to Left Layout" id="p-rtll">
      <SelectField id="p-rtll">假</SelectField>
    </Row>
    <Row label="从右边到左边" id="p-rtl">
      <SelectField id="p-rtl">假</SelectField>
    </Row>
    <Row label="背景色" id="p-back">
      <ColorField id="p-back" swatch={checker} />
    </Row>
    <Row label="边框">
      <BorderButtons />
    </Row>
    <Row label="边框宽度" id="p-bw">
      <input
        type="range"
        aria-label="边框宽度"
        defaultValue={10}
        className={clsx(
          slider,
          "w-[125px] [&::-webkit-slider-runnable-track]:from-10% [&::-webkit-slider-runnable-track]:to-10%"
        )}
      />
      <span className="ml-1 flex flex-1">
        <SpinField id="p-bw" value={1} />
      </span>
    </Row>
    <Row label="边框线样式" id="p-bs">
      <SelectField id="p-bs" blank />
    </Row>
    <Row label="边框颜色" id="p-bc">
      <ColorField id="p-bc" swatch="bg-black" />
    </Row>
    <Row label="前景色" id="p-fc">
      <ColorField id="p-fc" swatch="bg-black" />
    </Row>
    <Row label="水印" id="p-wm" expand>
      <EllipsisField id="p-wm" value="(无)" />
    </Row>
    <Row label="填充" id="p-pad">
      <EllipsisField id="p-pad" value="0, 0, 0, 0" dots={false} />
    </Row>
    <Row marker={false}>
      <span className="w-[26px]">
        <PadIcon turn={0} />
      </span>
      <SpinField label="Left" value={0} />
      <span className="flex w-[30px] pl-[6px]">
        <PadIcon turn={180} />
      </span>
      <SpinField label="Right" value={0} />
    </Row>
    <Row marker={false}>
      <span className="w-[26px]">
        <PadIcon turn={90} />
      </span>
      <SpinField label="Top" value={0} />
      <span className="flex w-[30px] pl-[6px]">
        <PadIcon turn={270} />
      </span>
      <SpinField label="Bottom" value={0} />
    </Row>
    <Row label="文字对齐">
      <AlignButtons />
    </Row>
    <Row label="样式表" id="p-ss" set>
      <EllipsisField id="p-ss" value="(集合)" />
    </Row>
    <Row label="样式表路径" id="p-sp">
      <EllipsisField id="p-sp" value="" />
    </Row>
    <Row label="页面颜色" id="p-pc">
      <ColorField id="p-pc" swatch="bg-white" />
    </Row>
    <Row marker={false}>
      <span className={clsx(fieldBox, "flex-1")} />
    </Row>
    <span className="pointer-events-none absolute inset-x-0 bottom-0 h-4 bg-linear-to-b from-[#f0f0f0]/0 to-[#f0f0f0]/80" />
  </div>
);

const Properties = () => {
  const [tab, setTab] = useState(0);
  const [category, setCategory] = useState(0);
  return (
    <section className="mt-1 flex min-h-0 flex-1 flex-col border border-[#c6c6c6]">
      <PanelHeader title="属性" />
      <div className="relative mx-[11px] mt-[9px] flex shrink-0">
        <select
          aria-label="Component"
          className="h-6 flex-1 appearance-none border border-[#a0a0a0] bg-white px-[3px] text-xs font-bold text-[#202020]"
        >
          <option>XtraReport{"\u00a0\u00a0\u00a0\u00a0"}报表</option>
        </select>
        <span className="pointer-events-none absolute top-[11px] right-1 flex">
          <Arrow />
        </span>
      </div>
      <div className="flex h-[41px] shrink-0 items-center border-b border-[#c6c6c6] pt-[9px] pr-[7px]">
        {categories.map(([name, art], i) => (
          <button
            key={name}
            type="button"
            aria-label={name}
            onClick={() => setCategory(i)}
            className="relative flex h-8 w-9 shrink-0 items-center justify-center"
          >
            <Icon s={20}>{art}</Icon>
            {i === category && (
              <svg width="12" height="7" className="absolute -bottom-px left-3">
                <path d="M0 7L6 1l6 6z" fill="#f0f0f0" />
                <path d="M0 6.500L6 0.500l6 6" fill="none" stroke="#c6c6c6" />
              </svg>
            )}
          </button>
        ))}
        <span className="relative ml-[15px] flex flex-1">
          <input
            type="search"
            aria-label="Search"
            placeholder="输入搜索文本，搜索…"
            className="h-5 w-full border border-[#a0a0a0] bg-white px-[3px] pt-px text-xs placeholder:text-[#808080]"
          />
          <span className="pointer-events-none absolute top-[3px] right-[2px]">
            <Icon s={12}>
              <circle cx="7" cy="5" r="3.500" stroke="currentColor" strokeWidth="1.2" />
              <path d="M5 8l-4 4" stroke="currentColor" strokeWidth="1.3" />
            </Icon>
          </span>
        </span>
      </div>
      <PropertyRows />
      <div className="h-[149px] shrink-0 border-t border-[#c6c6c6] pt-[18px] pl-2 text-xs leading-4 text-[#202020]">
        <h3 className="font-bold">Right to Left Layout</h3>
        <p className="mt-[6px]">Specifies the position of controls within report bands.</p>
      </div>
      <Tabs
        className="pl-[2px]"
        active={tab}
        onSelect={setTab}
        items={[
          [
            "属性",
            <>
              <Px d="M2 2h12v2h-12z" c={BLUE} />
              <Px d="M2 5h3v1h-3zM6 5h8v1h-8zM2 8h3v1h-3zM6 8h5v1h-5zM2 11h3v1h-3zM6 11h2v1h-2z" c="#a5a5aa" />
              <circle cx="12" cy="11.500" r="2" stroke={BLUE} strokeWidth="2" />
              <circle cx="12" cy="11.500" r="3.500" stroke={BLUE} strokeDasharray="1.6 1.2" />
            </>,
          ],
          [
            "Report Gallery",
            <>
              <path d="M12 1.500H1.500V13M3.500 3.500h11v11h-11z" stroke={GRAY} strokeWidth="1.3" />
              <Px d="M5 10h2v3h-2z" c={ORANGE} />
              <Px d="M8 8h2v5h-2z" c={BLUE} />
              <Px d="M11 6h2v7h-2z" c={RED} />
            </>,
          ],
        ]}
      />
    </section>
  );
};

const App = () => (
  <div className="flex h-screen flex-col border border-[#4768a0] bg-[#f0f0f0] font-['Noto_Sans','Noto_Sans_CJK_SC',sans-serif]">
    <TitleBar />
    <MenuBar />
    <FormatToolbar />
    <LayoutToolbar />
    <div className="mb-[29px] flex min-h-0 flex-1">
      <Toolbox />
      <main className="flex min-w-0 flex-1 flex-col">
        <Designer />
        <StatusBar />
        <ErrorsPanel />
      </main>
      <aside className="mr-[2px] ml-[2px] flex w-[401px] shrink-0 flex-col">
        <FieldList />
        <Properties />
      </aside>
    </div>
  </div>
);

export default App;
